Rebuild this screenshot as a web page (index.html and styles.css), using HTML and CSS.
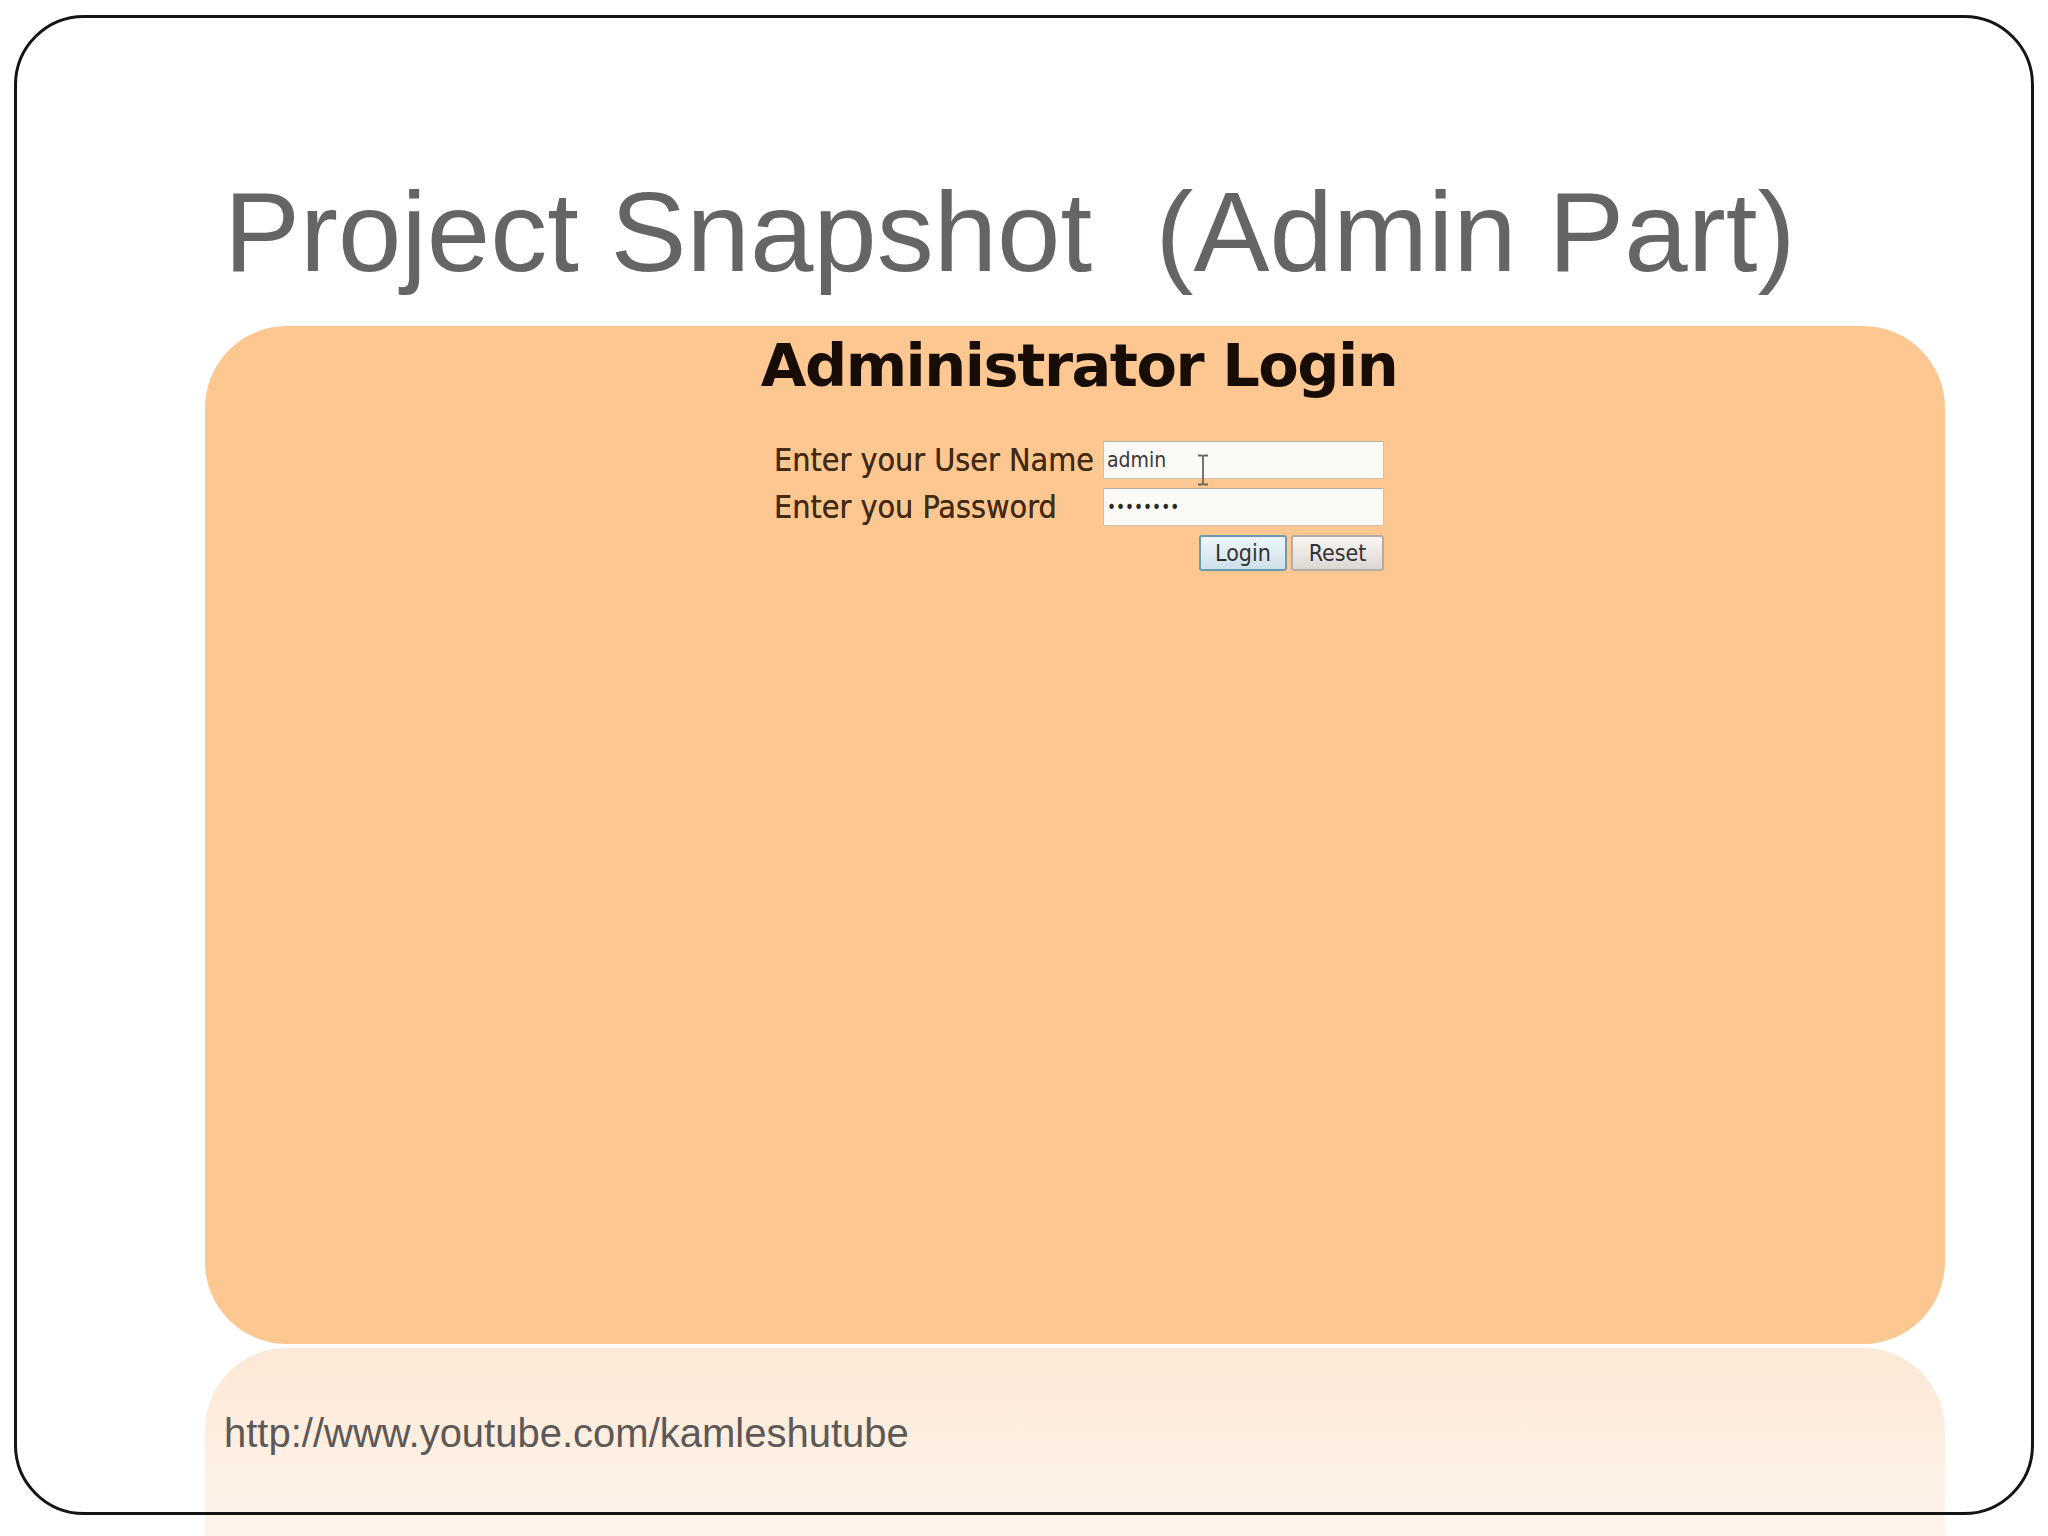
FILE: index.html
```html
<!DOCTYPE html>
<html lang="en">
<head>
<meta charset="utf-8">
<title>Project Snapshot (Admin Part)</title>
<link rel="stylesheet" href="styles.css">
</head>
<body>
<div class="slide">
  <h1 class="title">Project Snapshot&nbsp; (Admin Part)</h1>
  <div class="shot">
    <h2 class="login-title">Administrator Login</h2>
    <form class="login-form">
      <label class="field-label" for="user">Enter your User Name</label>
      <div class="field-cell">
        <input class="field" id="user" type="text" value="admin">
        <svg class="ibeam" width="14" height="32" viewBox="0 0 14 32" aria-hidden="true">
          <path d="M2 1.5 H5.5 Q7 1.5 7 3 Q7 1.5 8.5 1.5 H12 M7 3 V29 M2 30.5 H5.5 Q7 30.5 7 29 Q7 30.5 8.5 30.5 H12" fill="none" stroke="#6b6660" stroke-width="1.8"/>
        </svg>
      </div>
      <label class="field-label" for="pass">Enter you Password</label>
      <div class="field-cell">
        <input class="field field-pass" id="pass" type="password" value="12345678">
      </div>
      <div class="buttons">
        <button type="button" class="btn btn-login">Login</button>
        <button type="button" class="btn btn-reset">Reset</button>
      </div>
    </form>
  </div>
  <div class="reflection">
    <p class="url">http://www.youtube.com/kamleshutube</p>
  </div>
</div>
</body>
</html>
```
FILE: styles.css
```css
html, body {
  margin: 0;
  padding: 0;
  background: #ffffff;
}

body {
  width: 2048px;
  height: 1536px;
  overflow: hidden;
  position: relative;
}

.slide {
  position: relative;
  margin-left: 14px;
  margin-top: 15px;
  width: 2020px;
  height: 1500px;
  padding-top: 160px;
  box-sizing: border-box;
}

.slide::after {
  content: "";
  position: absolute;
  inset: 0;
  border: 3px solid #141414;
  border-radius: 70px;
  pointer-events: none;
  z-index: 5;
}

.title {
  margin: 0 0 0 210px;
  font-family: "Liberation Sans", Arial, sans-serif;
  font-weight: normal;
  font-size: 114px;
  line-height: 114px;
  height: 114px;
  color: #666464;
  white-space: nowrap;
}

.shot {
  margin: 37px 0 0 191px;
  width: 1740px;
  height: 1018px;
  box-sizing: border-box;
  padding: 5px 0 0 8px;
  background: #fcc791;
  border-radius: 82px;
  display: flex;
  flex-direction: column;
  align-items: center;
}

.login-title {
  margin: 0;
  height: 70px;
  font-family: "DejaVu Sans", Verdana, sans-serif;
  font-weight: bold;
  font-size: 59px;
  line-height: 70px;
  letter-spacing: -1.5px;
  color: #170d06;
  white-space: nowrap;
}

.login-form {
  margin: 40px 0 0 0;
  display: grid;
  grid-template-columns: 329px 281px;
  grid-template-rows: 38px 38px 36px;
  row-gap: 9px;
}

.field-label {
  font-family: "DejaVu Sans Condensed", "DejaVu Sans", sans-serif;
  font-stretch: condensed;
  font-size: 32px;
  line-height: 38px;
  color: #432a14;
  white-space: nowrap;
  text-shadow: 0 0 0.6px #432a14;
}

.field-cell {
  position: relative;
}

.field {
  display: block;
  width: 281px;
  height: 38px;
  box-sizing: border-box;
  margin: 0;
  padding: 0 0 0 3px;
  border: 1px solid #cfbfad;
  border-top-color: #bcae9f;
  background: #fcfaf7;
  font-family: "DejaVu Sans Condensed", "DejaVu Sans", sans-serif;
  font-size: 21px;
  color: #3a3836;
  outline: none;
}

.field-pass {
  font-size: 17px;
  color: #2a2826;
}

.ibeam {
  position: absolute;
  left: 93px;
  top: 13px;
}

.buttons {
  grid-column: 2;
  display: flex;
  justify-content: flex-end;
  gap: 4px;
}

.btn {
  height: 36px;
  margin: 0;
  padding: 0;
  box-sizing: border-box;
  border-radius: 3px;
  font-family: "DejaVu Sans Condensed", "DejaVu Sans", sans-serif;
  font-stretch: condensed;
  font-size: 23px;
  color: #333333;
}

.btn-login {
  width: 88px;
  border: 2px solid #6b9bb0;
  background: linear-gradient(#eef6fa, #cde1ea);
}

.btn-reset {
  width: 93px;
  border: 2px solid #b4aca6;
  background: linear-gradient(#f7f5f3, #dcd8d4);
}

.reflection {
  margin: 4px 0 0 191px;
  width: 1740px;
  height: 220px;
  box-sizing: border-box;
  padding: 63px 0 0 19px;
  border-radius: 82px 82px 0 0;
  background: linear-gradient(#fce8d6, #fdf1e5 60%, #fef6ee);
}

.url {
  margin: 0;
  font-family: "Liberation Sans", Arial, sans-serif;
  font-size: 40px;
  line-height: 45px;
  color: #5e5856;
  white-space: nowrap;
}
```
